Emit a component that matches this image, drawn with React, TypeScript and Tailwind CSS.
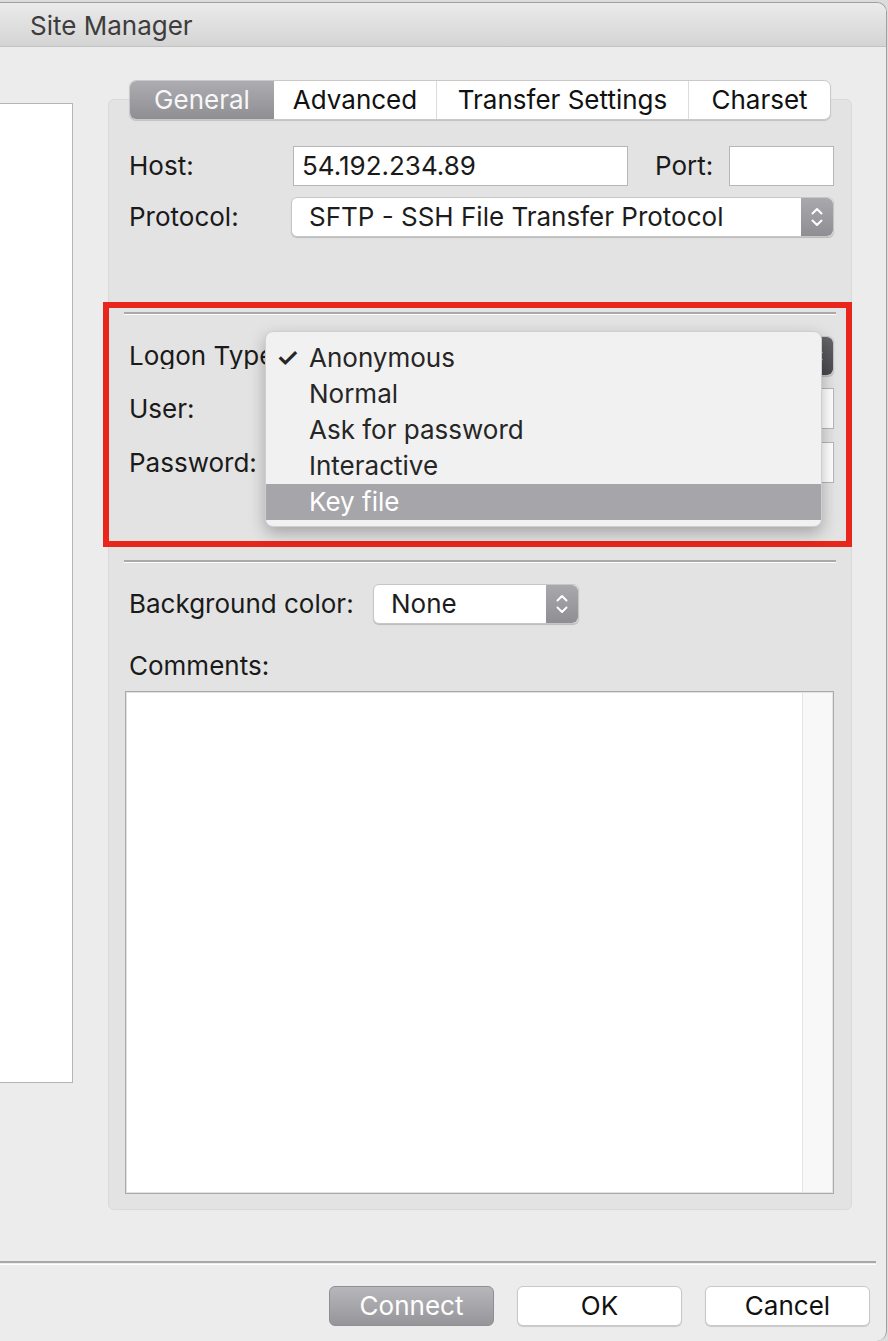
const font = "font-['Inter','Liberation_Sans',sans-serif]";

function Stepper({ dark }: { dark?: boolean }) {
  return (
    <div
      className={
        "w-[32px] h-full flex items-center justify-center rounded-r-[6px] " +
        (dark ? "bg-gradient-to-b from-[#66666a] to-[#4a4a4e]" : "bg-gradient-to-b from-[#a9a9ad] to-[#8f8f93]")
      }
    >
      <svg width="14" height="22" viewBox="0 0 14 22" fill="none" stroke="white" strokeWidth="2" strokeLinecap="round" strokeLinejoin="round">
        <path d="M2.5 7.5 L7 3 L11.5 7.5" />
        <path d="M2.5 14.5 L7 19 L11.5 14.5" />
      </svg>
    </div>
  );
}

function Select({ value, className, dark }: { value: string; className?: string; dark?: boolean }) {
  return (
    <div
      className={
        "h-[40px] flex bg-white rounded-[6px] border border-[#c6c6c6] shadow-[0_1px_1px_rgba(0,0,0,0.18)] " +
        (className ?? "")
      }
    >
      <div className="flex-1 flex items-center pl-[17px] text-[#1c1c1c] whitespace-nowrap">{value}</div>
      <Stepper dark={dark} />
    </div>
  );
}

function Separator({ className }: { className?: string }) {
  return (
    <div className={className}>
      <div className="h-[2px] bg-[#a9a9a9]" />
      <div className="h-[1px] bg-white" />
    </div>
  );
}

const menuItems = ["Anonymous", "Normal", "Ask for password", "Interactive", "Key file"];

export default function App() {
  return (
    <div className={"w-[888px] h-[1341px] bg-[#dcdcdc] overflow-hidden text-[26px] leading-none " + font}>
      <div className="w-[887px] h-[1339px] mt-[2px] bg-[#ececec] rounded-tr-[10px] rounded-br-[10px] border-r border-t border-[#a0a0a0] overflow-hidden">
        {/* title bar */}
        <div className="h-[44px] flex items-center pl-[30px] pt-[3px] bg-gradient-to-b from-[#ebebeb] to-[#d4d4d4] border-b border-[#c2c2c2] text-[#3d3d3d]">
          Site Manager
        </div>

        <div className="flex h-[1163px]">
          {/* site list */}
          <div className="w-[73px] mt-[56px] h-[980px] bg-white border border-l-0 border-[#b4b4b4]" />

          <div className="ml-[35px] w-[744px] mt-[33px] flex flex-col">
            {/* tabs */}
            <div className="relative z-10 mx-[21px] h-[40px] flex rounded-[7px] overflow-hidden border border-[#c9c9c9] bg-white shadow-[0_1px_1px_rgba(0,0,0,0.15)]">
              <div className="w-[144px] flex items-center justify-center bg-gradient-to-b from-[#adadb1] to-[#8f8f93] text-[#f7f7f7]">General</div>
              <div className="w-[163px] flex items-center justify-center text-[#111] border-r border-[#dcdcdc]">Advanced</div>
              <div className="w-[252px] flex items-center justify-center text-[#111] border-r border-[#dcdcdc]">Transfer Settings</div>
              <div className="flex-1 flex items-center justify-center text-[#111]">Charset</div>
            </div>

            {/* panel */}
            <div className="relative -mt-[21px] h-[1111px] bg-[#e3e3e3] rounded-[6px] border border-[#d9d9d9] pl-[20px] pr-[17px] pt-[45px] text-[#1a1a1a]">
              <div className="flex items-center h-[40px] pt-[1px]">
                <div className="w-[164px]">Host:</div>
                <div className="w-[335px] h-[40px] bg-white border border-[#b6b6b6] flex items-center pl-[8px]">54.192.234.89</div>
                <div className="ml-[27px]">Port:</div>
                <div className="ml-auto w-[105px] h-[40px] bg-white border border-[#b6b6b6]" />
              </div>

              <div className="flex items-center mt-[12px]">
                <div className="w-[162px]">Protocol:</div>
                <Select value="SFTP - SSH File Transfer Protocol" className="flex-1" />
              </div>

              <Separator className="mt-[75px] -ml-[5px] -mr-[2px]" />

              {/* logon section */}
              <div className="flex items-center mt-[21px]">
                <div className="w-[162px]">
                  <div className="w-[136px] overflow-hidden whitespace-nowrap">Logon Type:</div>
                </div>
                <Select value="Anonymous" className="flex-1" dark />
              </div>
              <div className="flex items-center mt-[12px]">
                <div className="w-[162px]">User:</div>
                <div className="flex-1 h-[41px] bg-white border border-[#b6b6b6]" />
              </div>
              <div className="flex items-center mt-[13px]">
                <div className="w-[162px]">Password:</div>
                <div className="flex-1 h-[41px] bg-white border border-[#b6b6b6]" />
              </div>

              <Separator className="mt-[77px] -ml-[5px] -mr-[2px]" />

              <div className="flex items-center mt-[21px]">
                <div className="w-[244px]">Background color:</div>
                <Select value="None" className="w-[206px]" />
              </div>

              <div className="mt-[27px] h-[30px] flex items-center">Comments:</div>

              <div className="mt-[10px] -ml-[4px] h-[503px] border border-[#a9a9a9] bg-white flex">
                <div className="flex-1 border border-r-0 border-[#e2e2e2]" />
                <div className="w-[31px] bg-[#f8f8f8] border-l border-[#e4e4e4] border-y border-r border-[#e2e2e2]" />
              </div>

              {/* red highlight */}
              <div className="absolute left-[-6px] top-[202px] w-[749px] h-[245px] border-[6px] border-[#e8261b]" />

              {/* open logon type menu */}
              <div className="absolute left-[156px] top-[231px] w-[557px] h-[196px] py-[8px] rounded-[8px] bg-[#f1f1f1] border border-[#cfcfcf] shadow-[0_6px_16px_rgba(0,0,0,0.28)]">
                {menuItems.map((item, i) => (
                  <div
                    key={item}
                    className={
                      "h-[36px] flex items-center " +
                      (item === "Key file" ? "bg-[#a6a5aa] text-white" : "text-[#262626]")
                    }
                  >
                    <span className="w-[43px] pl-[10px] font-semibold">{i === 0 ? "✓" : ""}</span>
                    <span>{item}</span>
                  </div>
                ))}
              </div>
            </div>
          </div>
        </div>

        {/* footer */}
        <div className="w-[876px] mt-[51px]">
          <div className="h-[2px] bg-[#a8a8a8]" />
          <div className="h-[1px]" />
          <div className="h-[1px] bg-white" />
        </div>
        <div className="flex justify-end gap-[23px] pr-[16px] mt-[21px]">
          <div className="w-[165px] h-[40px] rounded-[6px] flex items-center justify-center text-white bg-gradient-to-b from-[#b7b7bb] to-[#96969a] border border-[#8f8f93]">
            Connect
          </div>
          <div className="w-[165px] h-[40px] rounded-[6px] flex items-center justify-center text-[#111] bg-white border border-[#c8c8c8] shadow-[0_1px_1px_rgba(0,0,0,0.15)]">
            OK
          </div>
          <div className="w-[165px] h-[40px] rounded-[6px] flex items-center justify-center text-[#111] bg-white border border-[#c8c8c8] shadow-[0_1px_1px_rgba(0,0,0,0.15)]">
            Cancel
          </div>
        </div>
      </div>
    </div>
  );
}
